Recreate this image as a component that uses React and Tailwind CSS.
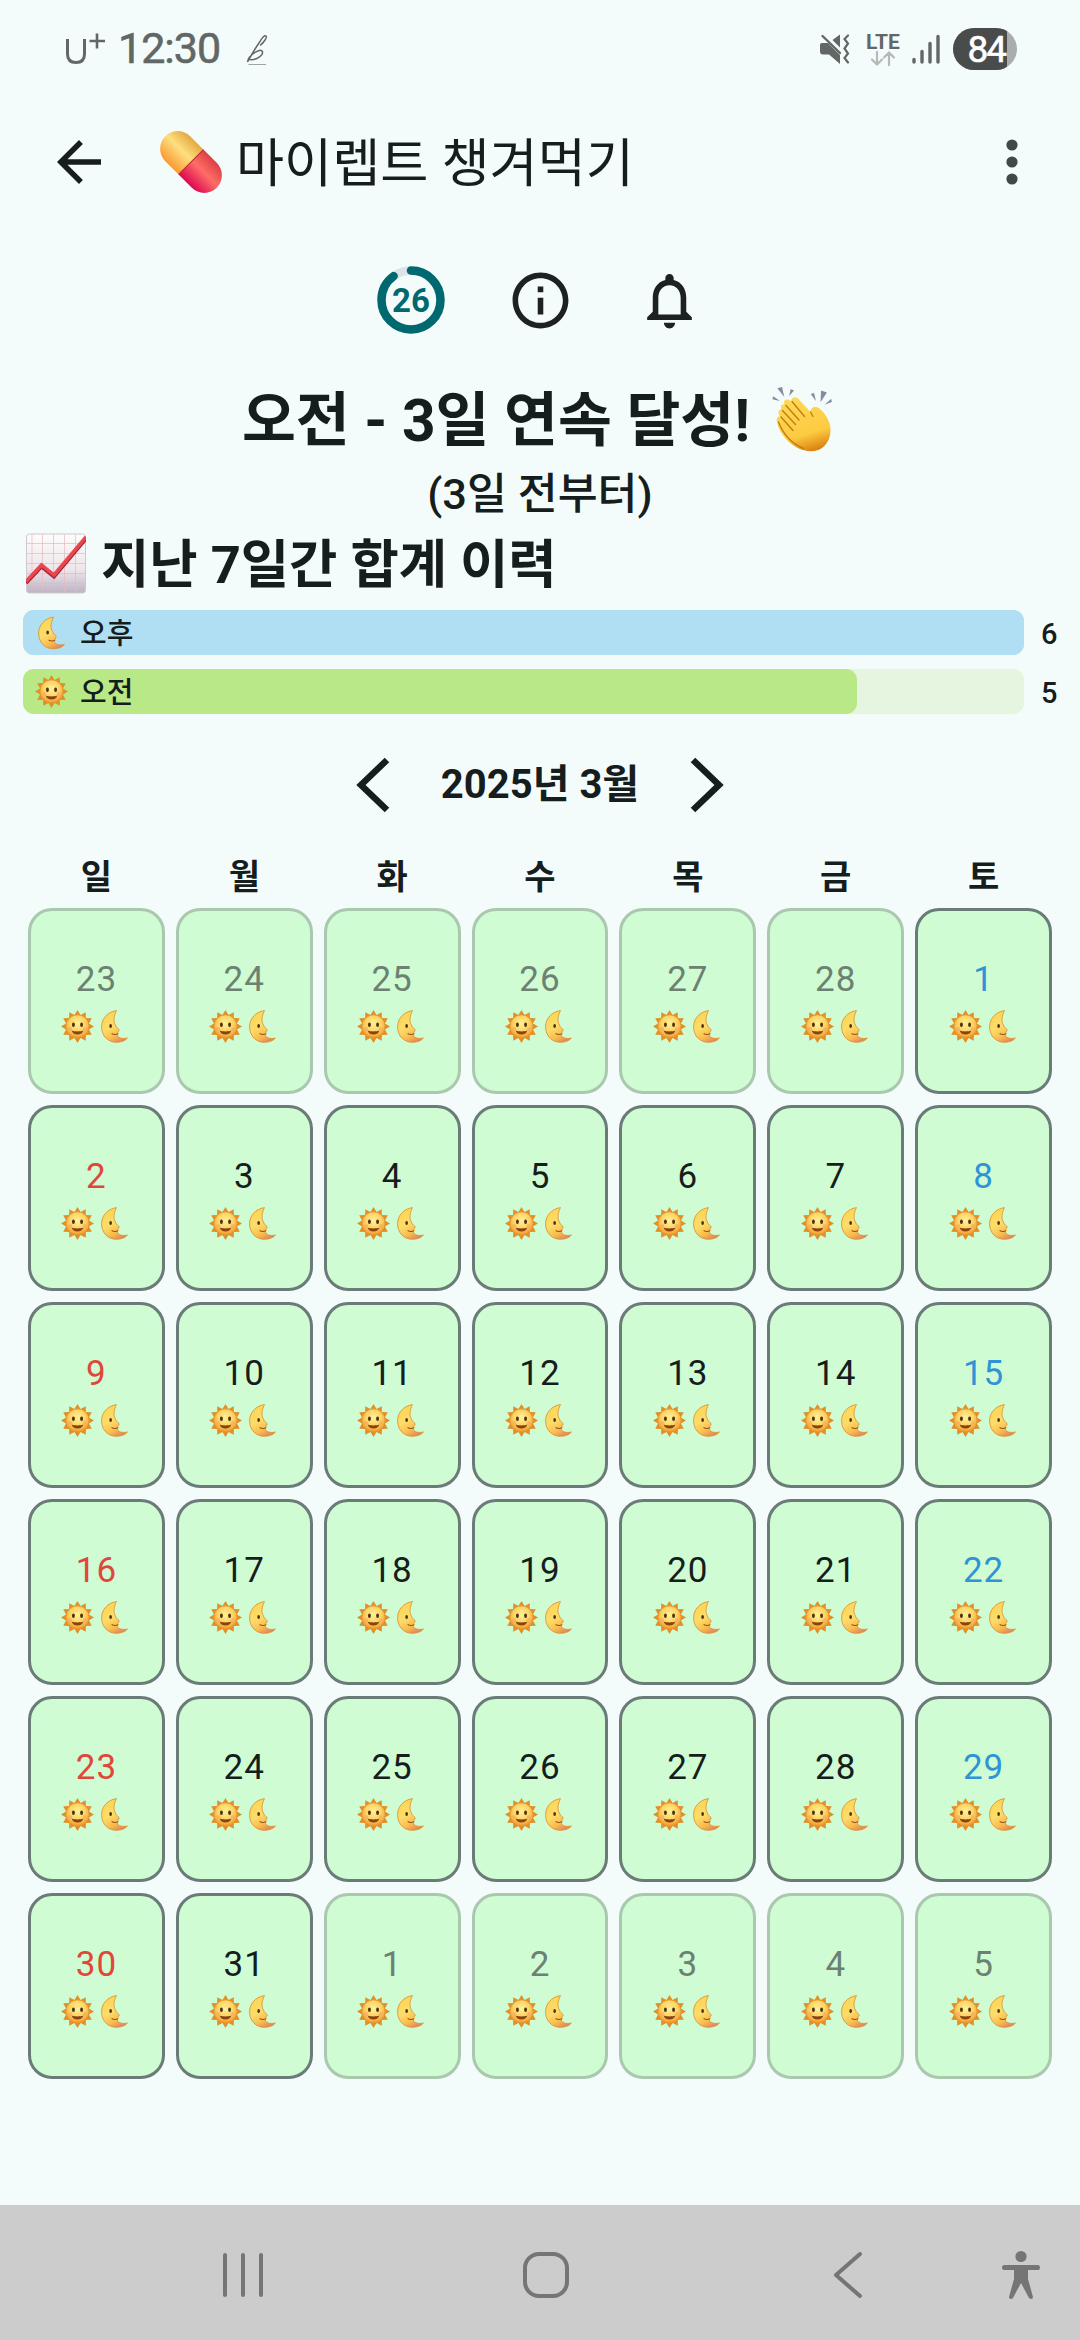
import React from "react";

const weekdays = ["일", "월", "화", "수", "목", "금", "토"];

const history = [
  { id: "pm", label: "오후", count: 6, track: "bg-[#b0dff4]", fill: "bg-[#b0dff4]" },
  { id: "am", label: "오전", count: 5, track: "bg-[#e5f5df]", fill: "bg-[#b9e986]" },
];

// 2025년 3월: 앞뒤 달 날짜까지 6주
const days = Array.from({ length: 42 }, (_, i) => {
  const date = new Date(2025, 1, 23 + i);
  return {
    id: i,
    day: date.getDate(),
    weekday: date.getDay(),
    outside: date.getMonth() !== 2,
  };
});

// 햇살 12개
const sunRays = Array.from({ length: 24 }, (_, i) => {
  const r = i % 2 === 0 ? 17 : 12.2;
  const a = (i * Math.PI) / 12 - Math.PI / 2;
  return `${(17 + r * Math.cos(a)).toFixed(2)},${(17 + r * Math.sin(a)).toFixed(2)}`;
}).join(" ");

function dayColor(d) {
  if (d.outside) return "text-[#6c8171]";
  if (d.weekday === 0) return "text-[#e0473a]";
  if (d.weekday === 6) return "text-[#2f93d6]";
  return "text-[#161d1d]";
}

function EmojiDefs() {
  return (
    <svg className="absolute h-0 w-0" aria-hidden="true">
      <defs>
        <radialGradient id="sunFace" cx="50%" cy="38%" r="62%">
          <stop offset="0" stopColor="#fff19a" />
          <stop offset="0.55" stopColor="#fdd364" />
          <stop offset="1" stopColor="#ee962c" />
        </radialGradient>
        <linearGradient id="moonBody" x1="0.3" y1="0" x2="0.75" y2="1">
          <stop offset="0" stopColor="#fbd552" />
          <stop offset="0.45" stopColor="#fddc6c" />
          <stop offset="0.75" stopColor="#f9bd4c" />
          <stop offset="1" stopColor="#e27f62" />
        </linearGradient>
        <linearGradient id="pillTop" x1="0" y1="0" x2="1" y2="0">
          <stop offset="0" stopColor="#fb9a30" />
          <stop offset="0.55" stopColor="#fddf80" />
          <stop offset="1" stopColor="#e5a83e" />
        </linearGradient>
        <linearGradient id="pillBottom" x1="0" y1="0" x2="1" y2="0">
          <stop offset="0" stopColor="#dc0850" />
          <stop offset="0.55" stopColor="#ff6d68" />
          <stop offset="1" stopColor="#dc4044" />
        </linearGradient>
        <linearGradient id="chartBg" x1="0" y1="0" x2="0" y2="1">
          <stop offset="0" stopColor="#fdfcfc" />
          <stop offset="0.6" stopColor="#eee6ea" />
          <stop offset="1" stopColor="#bdb3c3" />
        </linearGradient>
        <linearGradient id="handSkin" x1="0.3" y1="0" x2="0.6" y2="1">
          <stop offset="0" stopColor="#ffd956" />
          <stop offset="0.7" stopColor="#fdca42" />
          <stop offset="1" stopColor="#dc8412" />
        </linearGradient>
      </defs>
    </svg>
  );
}

function Sun({ className }) {
  return (
    <svg viewBox="0 0 34 34" className={className}>
      <polygon points={sunRays} fill="#e38f28" />
      <circle cx="17" cy="17" r="12" fill="url(#sunFace)" stroke="#e0922c" strokeWidth="0.8" />
      <ellipse cx="12.8" cy="15.2" rx="1.5" ry="2.3" fill="#4d330d" />
      <ellipse cx="21.2" cy="15.2" rx="1.5" ry="2.3" fill="#4d330d" />
      <circle cx="9.5" cy="19.5" r="2" fill="#f9a56a" opacity="0.6" />
      <circle cx="24.5" cy="19.5" r="2" fill="#f9a56a" opacity="0.6" />
      <path d="M11 21.2c3 1.200 9 1.200 12 0-.6 2.800-3 4-6 4s-5.400-1.200-6-4z" fill="#8a4310" />
    </svg>
  );
}

function Moon({ className }) {
  return (
    <svg viewBox="0 0 28 34" className={className}>
      <path
        d="M16 .5C6.500 2 .6 9 .6 17.300.6 27 7.500 33.400 15.800 33.400c5 0 9-1.400 11.600-4.400-2.800.6-5.900.5-7.900-.3-1.700-.8-2.700-2.200-2.300-3.700l.8-.9-.5-1 .4-1.300c.8-.2 1.400-.8 1-1.400-1.400-1.400-3.500-3.300-4-5C12.400 11 13.500 6 16 .5z"
        fill="url(#moonBody)"
        stroke="#dd9232"
        strokeWidth="0.9"
      />
      <ellipse cx="10" cy="16.500" rx="1.400" ry="2" fill="#4d330d" />
      <path d="M11 24.300c2 1.200 4.500 1.300 6.500.3" stroke="#9a4c18" strokeWidth="1.100" fill="none" />
    </svg>
  );
}

function Pill() {
  return (
    <svg viewBox="0 0 62 62" className="h-[62px] w-[62px]">
      <g transform="rotate(-45 31 31)">
        <path d="M13.400 31V12.200a17.600 17.600 0 0 1 35.200 0V31z" fill="url(#pillTop)" />
        <path d="M13.400 31v18.800a17.600 17.600 0 0 0 35.200 0V31z" fill="url(#pillBottom)" />
        <path d="M13.400 31h35.200" stroke="#b5312a" strokeWidth="1" />
      </g>
    </svg>
  );
}

function Clap() {
  return (
    <svg viewBox="0 0 60 66" className="h-[66px] w-[60px]">
      <g fill="#858d9d">
        <path d="M5.300 2.200 10 1l2.300 10z" />
        <path d="M18.500 3.300l3.500.9-4.800 6z" />
        <path d="M1.200 10.300.4 13.200 8 15z" />
        <path d="M38.700 8l3.400-.9 1.800 7.800z" />
        <path d="M49 4.500l5.900 1.900-6.300 9.800z" />
        <path d="M59.200 12.700l.6 3.300-7.200 2.700z" />
      </g>
      <path
        d="M5 36C3.800 32 6 30 8 30.500 5 26 7 23 9.500 23.500 8 20 9.500 18 12 18.500 10.500 14 16 11.500 19 15.500c.5-5 6-5.500 8.500-1.500l11 12c0-5 5.500-6.500 9.500-3 6 5 11 14 10.500 22C58 57 50 65 40 65.200c-10 .3-20-5.200-26-12.200C9 47 6 42 5 36z"
        fill="url(#handSkin)"
      />
      <path
        d="M14 19.500l13 14.500M20 15.500l12.500 15M10.500 24.500l13 14M9 31l12 13.500M38.500 26l2.500 4.500M6.500 36c4.500 12 12 21 25 26.500"
        stroke="#c47d10"
        strokeWidth="1.400"
        strokeLinecap="round"
        fill="none"
      />
    </svg>
  );
}

function ChartUp() {
  return (
    <svg viewBox="0 0 60 60" className="h-[61px] w-[60px]">
      <rect x="0.500" y="0.500" width="59" height="59" rx="3" fill="url(#chartBg)" stroke="#cfc6cf" />
      <path
        d="M6 1v58M16.500 1v58M27.500 1v58M38.500 1v58M49.500 1v58M1 10h58M1 20h58M1 30h58M1 40h58M1 50h58"
        stroke="#e7b9b9"
        strokeWidth="0.700"
      />
      <path d="M0 49.500 15.500 33 28 43 60 5" stroke="#a32537" strokeWidth="4" fill="none" />
      <path d="M0 48 15.500 31.500 28 41.500 60 3.500" stroke="#ea4650" strokeWidth="3.500" fill="none" />
    </svg>
  );
}

function StatusBar() {
  return (
    <div className="flex h-[98px] items-center justify-between pl-[63px] pr-[63px] text-[#626766]">
      <div className="flex items-center pb-0.5">
        <svg viewBox="0 0 42 34" className="h-[34px] w-[42px]" fill="none" stroke="#626766">
          <path d="M4.500 8v15c0 5.500 3 8.500 8.500 8.500s8.500-3 8.500-8.500V8" strokeWidth="3" />
          <path d="M26.500 10h15.500M34 2.500v15" strokeWidth="2.600" />
        </svg>
        <span className="ml-[13px] text-[43px] leading-none tracking-[-1px] [-webkit-text-stroke:0.6px_#626766]">12:30</span>
        <svg viewBox="0 0 22 32" className="ml-[26px] mt-1 h-[32px] w-[22px]" fill="none" stroke="#626766">
          <path d="M1.500 28C6 20 10 13 14 7.500c2-3.500 4.500-6.500 6-5.500s-2 6.500-6 9.500M1.500 28c1-7 12-13.500 14.500-11 2.500 3.500-5 9.500-12.500 8.500" strokeWidth="1.500" />
          <path d="M2.500 30.500H20" strokeWidth="1" opacity="0.600" />
        </svg>
      </div>
      <div className="flex items-center">
        <svg viewBox="0 0 30 30" className="h-[30px] w-[30px]">
          <path d="M0 10.500Q0 9 2 9h6l12 12v9L9 20.500H3q-3 0-3-3z" fill="#626766" />
          <path d="M12.500 6 20 .5v13z" fill="#626766" />
          <path d="M2.500 2 20 19" stroke="#626766" strokeWidth="2.400" strokeLinecap="round" />
          <path d="M28 1.500l-3.500 3.500 3.500 4.500-3.500 5 3.500 5-3.500 4.500 3.500 4.500" stroke="#626766" strokeWidth="2.200" fill="none" strokeLinecap="round" />
        </svg>
        <div className="ml-4 flex w-[34px] flex-col items-center">
          <span className="text-[21px] font-bold leading-[18px]">LTE</span>
          <svg viewBox="0 0 24 15" className="h-[15px] w-[24px]" fill="none" stroke="#b4baba" strokeWidth="2.200" strokeLinecap="round">
            <path d="M6 1v12M1 8.500l5 5 5-5M18 14V2M13 6.500l5-5 5 5" />
          </svg>
        </div>
        <svg viewBox="0 0 28 30" className="ml-3 h-[30px] w-[28px]" stroke="#626766" strokeWidth="3.400" strokeLinecap="round">
          <path d="M2 25.500V28M10 17.500V28M18 9.500V28M26 2.500V28" />
        </svg>
        <div className="ml-[13px] flex h-[42px] w-16 overflow-hidden rounded-full bg-[#a9adad]">
          <div className="flex w-[54px] items-center justify-end bg-[#4a4c4c] pr-0.5 text-[37px] leading-none tracking-[-2px] text-white [-webkit-text-stroke:0.6px_#fff]">
            84
          </div>
        </div>
      </div>
    </div>
  );
}

function AppBar() {
  return (
    <div className="flex h-32 items-center pl-[46px] pr-[35px]">
      <svg viewBox="0 0 24 24" className="h-[66px] w-[66px]" fill="#161d1d">
        <path d="M20 11H7.830l5.590-5.590L12 4l-8 8 8 8 1.410-1.410L7.830 13H20v-2z" />
      </svg>
      <div className="ml-12 flex flex-1 items-center gap-[14px]">
        <Pill />
        <h1 className="pt-1 text-[52.3px] leading-none whitespace-nowrap">마이렙트 챙겨먹기</h1>
      </div>
      <svg viewBox="0 0 66 66" className="h-[66px] w-[66px]" fill="#3f484a">
        <circle cx="33" cy="16" r="5.600" />
        <circle cx="33" cy="33" r="5.600" />
        <circle cx="33" cy="50" r="5.600" />
      </svg>
    </div>
  );
}

function Toolbar() {
  return (
    <div className="flex h-[150px] items-center justify-center gap-[62px] pb-0.5">
      <div className="relative flex h-[68px] w-[68px] items-center justify-center">
        <svg viewBox="0 0 68 68" className="absolute inset-0" fill="none" strokeWidth="8.500">
          <circle cx="34" cy="34" r="29.500" stroke="#dbe4e6" />
          <circle
            cx="34"
            cy="34"
            r="29.500"
            stroke="#00696f"
            strokeLinecap="round"
            pathLength="100"
            strokeDasharray="90 100"
            transform="rotate(-90 34 34)"
          />
        </svg>
        <span className="text-[33px] font-bold leading-none text-[#00696f]">26</span>
      </div>
      <svg viewBox="0 0 24 24" className="h-[67px] w-[67px]" fill="#1d2121">
        <path d="M11 7h2v2h-2zm0 4h2v6h-2zm1-9C6.480 2 2 6.480 2 12s4.480 10 10 10 10-4.480 10-10S17.520 2 12 2zm0 18c-4.410 0-8-3.590-8-8s3.590-8 8-8 8 3.590 8 8-3.590 8-8 8z" />
      </svg>
      <svg viewBox="0 0 24 24" className="h-[67px] w-[67px]" fill="#1d2121">
        <path d="M12 22c1.100 0 2-.9 2-2h-4c0 1.100.9 2 2 2zm6-6v-5c0-3.070-1.630-5.640-4.500-6.320V4c0-.83-.67-1.500-1.500-1.500s-1.500.67-1.500 1.500v.68C7.640 5.360 6 7.920 6 11v5l-2 2v1h16v-1l-2-2zm-2 1H8v-6c0-2.480 1.510-4.500 4-4.500s4 2.020 4 4.500v6z" />
      </svg>
    </div>
  );
}

function HistoryBar({ item }) {
  return (
    <div className="flex items-center">
      <div className={`h-[45px] w-[1001px] rounded-[11px] ${item.track}`}>
        <div
          className={`flex h-full items-center rounded-[11px] pl-[11px] ${item.fill}`}
          style={{ width: `${(item.count / 6) * 100}%` }}
        >
          <div className="flex w-[34px] justify-center">
            {item.id === "pm" ? (
              <Moon className="h-[34px] w-[27px]" />
            ) : (
              <Sun className="h-[33px] w-[33px]" />
            )}
          </div>
          <span className="ml-3 pt-[3px] text-[29px] font-medium leading-none">{item.label}</span>
        </div>
      </div>
      <span className="ml-[17px] pt-[3px] text-[29px] font-medium leading-none">{item.count}</span>
    </div>
  );
}

function DayCell({ d }) {
  return (
    <div
      className={`flex h-[186px] flex-col items-center rounded-[24px] border-3 bg-[#cffcd3] pt-[51px] ${
        d.outside ? "border-[#a9c8ae]" : "border-[#6a7b78]"
      }`}
    >
      <span className={`text-[35px] leading-[36px] tracking-[1px] ${dayColor(d)}`}>{d.day}</span>
      <div className="mt-3 flex gap-[7px] pr-[3px]">
        <Sun className="h-[33px] w-[33px]" />
        <Moon className="h-[33px] w-[27px]" />
      </div>
    </div>
  );
}

function NavBar() {
  return (
    <div className="mt-auto flex h-[135px] items-center bg-[#ccc] pl-[222px] pr-[39px] pt-1">
      <svg viewBox="0 0 42 48" className="h-12 w-[42px]" stroke="#757575" strokeWidth="4" strokeLinecap="round">
        <path d="M3 4v40M21 4v40M39 4v40" />
      </svg>
      <svg viewBox="0 0 48 48" className="ml-[258px] h-12 w-12" fill="none" stroke="#757575" strokeWidth="4">
        <rect x="3" y="3" width="42" height="42" rx="14" />
      </svg>
      <svg viewBox="0 0 32 48" className="ml-[262px] h-12 w-8" fill="none" stroke="#757575" strokeWidth="4" strokeLinecap="round" strokeLinejoin="round">
        <path d="M28 3 4 24l24 21" />
      </svg>
      <svg viewBox="0 0 40 50" className="ml-auto h-[50px] w-10" fill="#757575">
        <circle cx="20" cy="6.500" r="5.600" />
        <path d="M3 15h34q2 0 2 2.500T37 20H27v9l5 18q0 2-2 2t-2.500-2L20 33l-7.500 14q-.5 2-2.500 2t-2-2l5-18v-9H3q-2 0-2-2.500T3 15z" />
      </svg>
    </div>
  );
}

export default function App() {
  return (
    <div className="flex h-[2340px] w-[1080px] flex-col overflow-hidden bg-[#f4fcfb] font-[Roboto,'Noto_Sans_CJK_KR',sans-serif] text-[#161d1d]">
      <EmojiDefs />
      <StatusBar />
      <AppBar />
      <Toolbar />

      {/* 연속 달성 */}
      <div className="flex h-[86px] items-center justify-center gap-[22px] pr-1.5">
        <h2 className="pt-1 text-[58.6px] font-bold leading-none whitespace-nowrap">오전 - 3일 연속 달성!</h2>
        <Clap />
      </div>
      <p className="flex h-[68px] items-center justify-center pb-[3px] text-[43.4px] font-medium leading-none">(3일 전부터)</p>

      {/* 최근 7일 이력 */}
      <div className="flex h-[66px] items-center gap-[15px] pl-[26px]">
        <ChartUp />
        <h3 className="pt-1 text-[52.5px] font-bold leading-none whitespace-nowrap">지난 7일간 합계 이력</h3>
      </div>
      <div className="mt-[14px] flex flex-col gap-[14px] pl-[23px]">
        {history.map((item) => (
          <HistoryBar key={item.id} item={item} />
        ))}
      </div>

      {/* 달력 */}
      <div className="flex h-[141px] items-center justify-center">
        <svg viewBox="0 0 34 56" className="h-14 w-[34px]" fill="none" stroke="#161d1d" strokeWidth="6.500">
          <path d="M31 3 5 28l26 25" />
        </svg>
        <span className="w-[300px] text-center text-[40px] font-bold leading-none">2025년 3월</span>
        <svg viewBox="0 0 34 56" className="h-14 w-[34px]" fill="none" stroke="#161d1d" strokeWidth="6.500">
          <path d="M3 3l26 25L3 53" />
        </svg>
      </div>
      <div className="grid grid-cols-7 gap-x-[11px] px-7">
        {weekdays.map((w) => (
          <div key={w} className="flex h-[53px] items-start justify-center pt-[5px] text-[34px] font-bold leading-none">
            {w}
          </div>
        ))}
      </div>
      <div className="grid grid-cols-7 gap-[11px] px-7">
        {days.map((d) => (
          <DayCell key={d.id} d={d} />
        ))}
      </div>

      <NavBar />
    </div>
  );
}
